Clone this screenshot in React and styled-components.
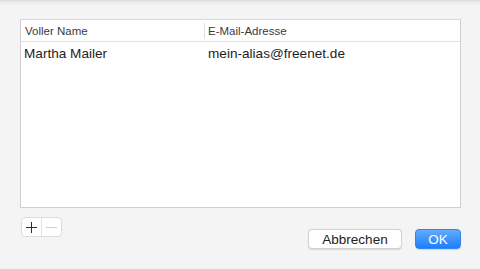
import React from 'react';
import styled, { createGlobalStyle } from 'styled-components';

const GlobalStyle = createGlobalStyle`
  html, body {
    margin: 0;
    padding: 0;
    background: #f4f4f4;
    font-family: "Liberation Sans", Arial, sans-serif;
  }
`;

const Sheet = styled.div`
  width: 480px;
  height: 269px;
  box-sizing: border-box;
  padding: 19px 19px 0 20px;
  background: linear-gradient(to bottom, #d9d9d9 0px, #ececec 2px, #f4f4f4 6px, #f4f4f4 100%);
`;

const Table = styled.div`
  height: 189px;
  box-sizing: border-box;
  background: #fff;
  border: 1px solid #cfcfcf;
  border-top-color: #d8d8d8;
`;

const HeaderRow = styled.div`
  display: flex;
  align-items: center;
  height: 21px;
  border-bottom: 1px solid #e2e2e2;
  font-size: 11.5px;
  color: #3a3a3a;
`;

const HeaderCell = styled.div`
  width: ${p => p.width || 'auto'};
  flex: ${p => (p.width ? 'none' : '1')};
  box-sizing: border-box;
  padding-left: ${p => p.pad}px;
  height: 16px;
  line-height: 16px;
  border-right: ${p => (p.divider ? '1px solid #e0e0e0' : 'none')};
`;

const Row = styled.div`
  display: flex;
  align-items: center;
  height: 22px;
  font-size: 13.6px;
  color: #1e1e1e;
`;

const Cell = styled.div`
  width: ${p => p.width || 'auto'};
  flex: ${p => (p.width ? 'none' : '1')};
  box-sizing: border-box;
  padding-left: ${p => p.pad}px;
`;

const Footer = styled.div`
  display: flex;
  justify-content: space-between;
  height: 32px;
  margin-top: 9px;
`;

const Segmented = styled.div`
  display: flex;
  align-self: flex-start;
  margin-left: 1px;
  height: 20px;
  box-sizing: border-box;
  border: 1px solid #dcdcdc;
  border-radius: 4px;
  background: #fff;
`;

const Segment = styled.div`
  width: 19px;
  display: flex;
  align-items: center;
  justify-content: center;
  border-left: ${p => (p.divider ? '1px solid #e2e2e2' : 'none')};
`;

const Buttons = styled.div`
  display: flex;
  align-self: flex-end;
  gap: 13px;
`;

const Button = styled.button`
  width: ${p => p.width}px;
  height: 20px;
  box-sizing: border-box;
  padding: 0;
  font-family: "Liberation Sans", Arial, sans-serif;
  font-size: 13.5px;
  border-radius: 4px;
  border: 1px solid ${p => (p.primary ? '#2b86f7' : '#d2d2d2')};
  color: ${p => (p.primary ? '#fff' : '#222')};
  background: ${p => (p.primary ? 'linear-gradient(to bottom, #63abfb, #1b7ff9)' : '#fff')};
  box-shadow: 0 0.5px 1px rgba(0, 0, 0, 0.12);
`;

export default function App() {
  return (
    <>
      <GlobalStyle />
      <Sheet>
        <Table>
          <HeaderRow>
            <HeaderCell width="184px" pad={4} divider>Voller Name</HeaderCell>
            <HeaderCell pad={3}>E-Mail-Adresse</HeaderCell>
          </HeaderRow>
          <Row>
            <Cell width="184px" pad={3}>Martha Mailer</Cell>
            <Cell pad={3}>mein-alias@freenet.de</Cell>
          </Row>
        </Table>
        <Footer>
          <Segmented>
            <Segment>
              <svg width="11" height="11" viewBox="0 0 11 11">
                <path d="M5.5 0v11M0 5.5h11" stroke="#2a2a2a" strokeWidth="1" />
              </svg>
            </Segment>
            <Segment divider>
              <svg width="11" height="11" viewBox="0 0 11 11">
                <path d="M0 5.5h11" stroke="#cfcfcf" strokeWidth="1" />
              </svg>
            </Segment>
          </Segmented>
          <Buttons>
            <Button width={94}>Abbrechen</Button>
            <Button width={46} primary>OK</Button>
          </Buttons>
        </Footer>
      </Sheet>
    </>
  );
}
